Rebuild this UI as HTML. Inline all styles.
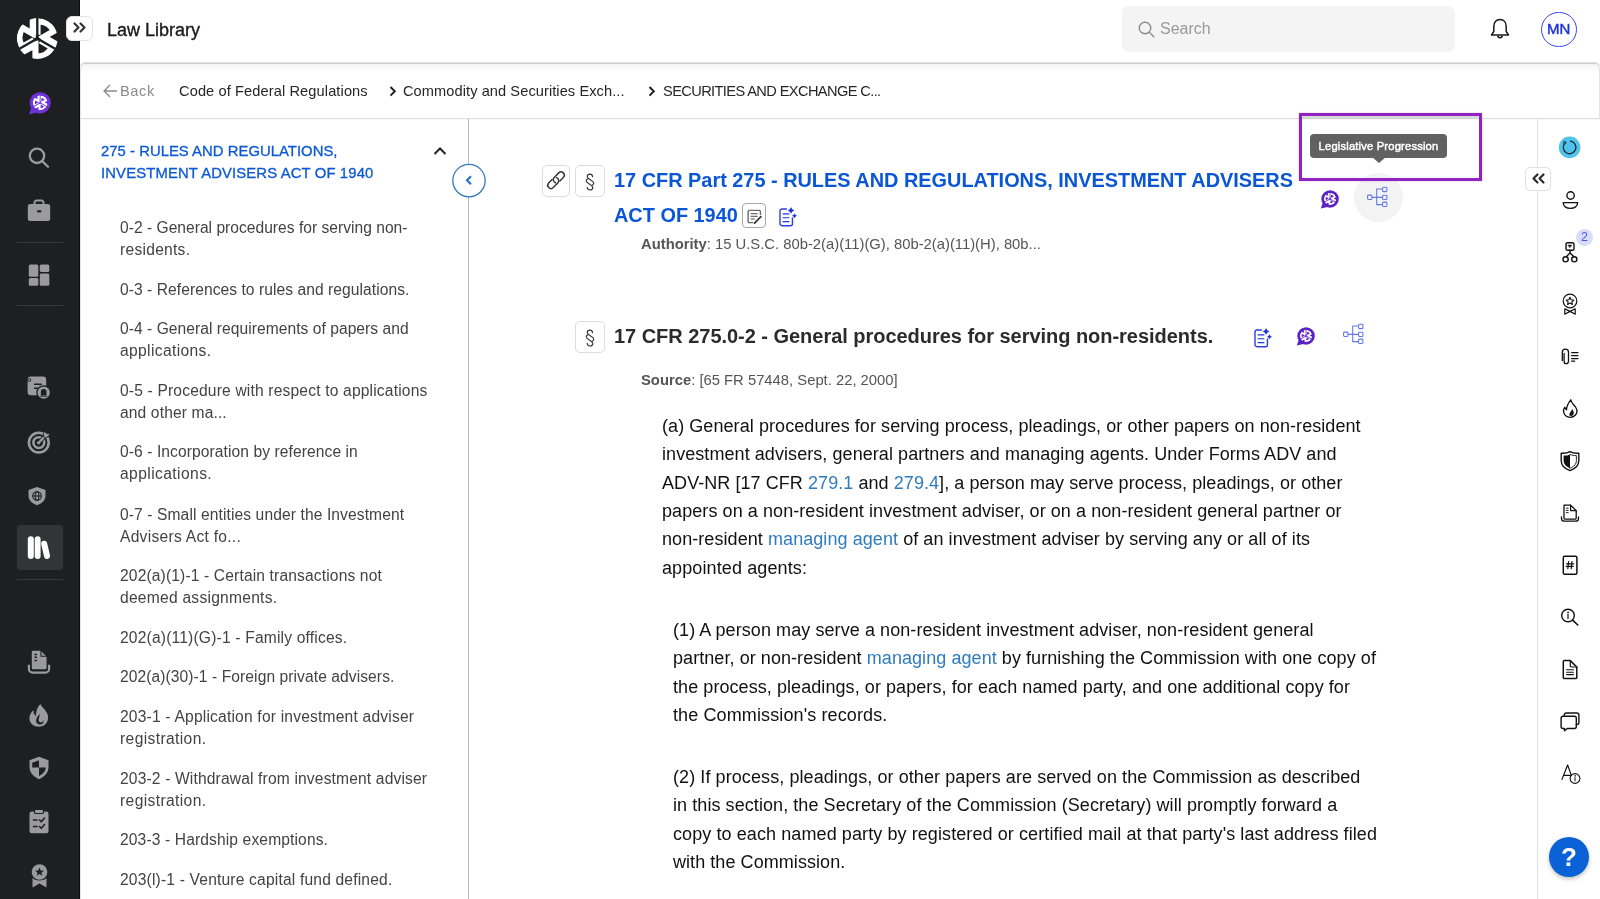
<!DOCTYPE html>
<html><head><meta charset="utf-8">
<style>
*{box-sizing:border-box;margin:0;padding:0}
html,body{width:1600px;height:899px;overflow:hidden;background:#fff;font-family:"Liberation Sans",sans-serif;-webkit-font-smoothing:antialiased}
body{will-change:transform}
.abs{position:absolute}
svg{position:absolute;overflow:visible}
#sb{position:absolute;left:0;top:0;width:80px;height:899px;background:#1e1f21}
.dv{position:absolute;left:17px;width:46px;height:1px;background:#36373a}
#top{position:absolute;left:80px;top:0;width:1520px;height:63px;background:#fff}
#crumb{position:absolute;left:80px;top:63px;width:1520px;height:56px;background:#fff;border-top:1px solid #cbcbcb;border-bottom:1px solid #dedede;border-left:1px solid #e4e4e4;border-right:1px solid #e4e4e4;border-top-left-radius:5px;border-top-right-radius:5px;box-shadow:0 -0.5px 1.5px rgba(0,0,0,0.12), inset 0 8px 8px -6px rgba(0,0,0,0.07)}
.bc{position:absolute;top:17px;font-size:14.6px;line-height:20px;color:#262626;white-space:nowrap}
#lp{position:absolute;left:80px;top:119px;width:389px;height:780px;border-right:1px solid #b9b9b9;border-left:1px solid #e4e4e4}
.li{position:absolute;left:39px;font-size:15.6px;line-height:22px;color:#434343;white-space:nowrap}
#rs{position:absolute;left:1537px;top:119px;width:63px;height:780px;border-left:1px solid #e2e2e2}
.p{position:absolute;font-size:18px;line-height:28.35px;color:#111;white-space:nowrap;letter-spacing:0.05px}
.p a{color:#2f7bc0;text-decoration:none}
.btn{position:absolute;border:1px solid #dcdcdc;border-radius:5px;background:#fff}
</style></head>
<body>
<!-- LEFT DARK SIDEBAR -->
<div id="sb"><div class="abs" style="left:79px;top:0;width:1px;height:899px;background:#0c0d0e"></div>
  <!-- logo -->
  <svg style="left:17px;top:17.8px" width="41" height="41" viewBox="-19.8 -20 40 40">
    <defs>
      <clipPath id="cc"><circle r="19.9"/></clipPath>
      <g id="lg">
        <g clip-path="url(#cc)">
          <g fill="none" stroke="#fff" stroke-width="6" stroke-linejoin="miter" stroke-miterlimit="10">
            <path id="s1" d="M-4.4,-24 V-4.6 L-14.4,-10.4 A16.8,16.8 0 0 0 -14.6,8.2 L-3.2,1.6"/>
            <use href="#s1" transform="rotate(120)"/>
            <use href="#s1" transform="rotate(240)"/>
          </g>
          <g stroke="var(--lbg)" stroke-width="2.3">
            <line id="sp" x1="0" y1="0" x2="0" y2="-22"/>
            <use href="#sp" transform="rotate(120)"/>
            <use href="#sp" transform="rotate(240)"/>
          </g>
          <circle r="2" fill="var(--lbg)"/>
        </g>
      </g>
    </defs>
    <use href="#lg" style="--lbg:#1e1f21"/>
  </svg>
  <!-- purple chat -->
  <svg style="left:28px;top:92px" width="23" height="23" viewBox="0 0 23 23">
    <circle cx="12.2" cy="10.8" r="10.6" fill="#6f32d9"/>
    <path d="M1,22.5 L3.5,15 L9,20.5 Z" fill="#6f32d9"/>
    <g transform="translate(12.2,10.8) scale(0.37)"><use href="#lg" style="--lbg:#6f32d9"/></g>
  </svg>
  <!-- search -->
  <svg style="left:27px;top:146px" width="24" height="24" viewBox="0 0 24 24" fill="none" stroke="#9b9b9d" stroke-width="2.3" stroke-linecap="round">
    <circle cx="10" cy="9.8" r="7.2"/><line x1="15.4" y1="15.2" x2="21" y2="20.8"/>
  </svg>
  <!-- briefcase -->
  <svg style="left:27px;top:199px" width="24" height="24" viewBox="0 0 24 24">
    <path d="M7.5,5.5 V3.6 A2,2 0 0 1 9.5,1.6 H14.5 A2,2 0 0 1 16.5,3.6 V5.5" fill="none" stroke="#9b9b9d" stroke-width="2"/>
    <rect x="0.8" y="5" width="22.4" height="17" rx="2.5" fill="#9b9b9d"/>
    <rect x="10.2" y="11.2" width="4" height="2.2" fill="#1e1f21"/>
  </svg>
  <div class="dv" style="top:242px"></div>
  <!-- dashboard -->
  <svg style="left:28px;top:263.8px" width="22" height="22" viewBox="0 0 22 22" fill="#9b9b9d">
    <rect x="0.8" y="0.5" width="9.5" height="12.2" rx="1.5"/>
    <rect x="0.8" y="14" width="9.5" height="7.8" rx="1.5"/>
    <rect x="11.8" y="0.5" width="9.5" height="7.6" rx="1.5"/>
    <rect x="11.8" y="9.4" width="9.5" height="12.4" rx="1.5"/>
  </svg>
  <div class="dv" style="top:305px"></div>
  <!-- doc bell -->
  <svg style="left:27px;top:376px" width="25" height="25" viewBox="0 0 25 25">
    <rect x="0.6" y="0.6" width="18.6" height="18.6" rx="3.2" fill="#9b9b9d"/>
    <circle cx="2.3" cy="4" r="1.5" fill="none" stroke="#1e1f21" stroke-width="0.9"/>
    <rect x="7" y="7.6" width="7.8" height="1.5" rx="0.5" fill="#1e1f21"/>
    <rect x="7" y="11.4" width="3.8" height="1.5" rx="0.5" fill="#1e1f21"/>
    <circle cx="16.7" cy="16.6" r="7.4" fill="#1e1f21"/>
    <circle cx="16.7" cy="16.6" r="6.1" fill="#9b9b9d"/>
    <path d="M13.9,19.3 V15.9 A2.8,2.8 0 0 1 19.5,15.9 V19.3 Z" fill="#1e1f21"/>
    <rect x="13.2" y="19.6" width="7" height="1" fill="#1e1f21"/>
  </svg>
  <!-- target -->
  <svg style="left:27px;top:430px" width="25" height="25" viewBox="0 0 25 25" fill="none" stroke="#9b9b9d">
    <circle cx="11.8" cy="12.6" r="9.9" stroke-width="2.6"/>
    <circle cx="11.8" cy="12.6" r="5.4" stroke-width="2.6"/>
    <circle cx="11.8" cy="12.6" r="1.9" fill="#9b9b9d" stroke="none"/>
    <line x1="11.8" y1="12.6" x2="21" y2="3.4" stroke="#1e1f21" stroke-width="4"/>
    <line x1="11.8" y1="12.6" x2="19.5" y2="4.9" stroke-width="2.2" stroke-linecap="round"/>
    <path d="M16.2,4.2 L17.4,1.2 L19.6,3.3 L23.4,3.6 L21.2,6.6 L17.6,8.4 Z" fill="#9b9b9d" stroke="#1e1f21" stroke-width="0.9"/>
  </svg>
  <!-- shield globe -->
  <svg style="left:27px;top:486px" width="20" height="20" viewBox="0 0 20 20">
    <path d="M10,1 L18.5,4 V10 C18.5,14.5 14.5,17.5 10,19.3 C5.5,17.5 1.5,14.5 1.5,10 V4 Z" fill="#9b9b9d"/>
    <g fill="none" stroke="#1e1f21" stroke-width="1.1"><circle cx="10" cy="10" r="4.3"/><ellipse cx="10" cy="10" rx="1.8" ry="4.3"/><line x1="5.7" y1="10" x2="14.3" y2="10"/></g>
  </svg>
  <!-- library active -->
  <div class="abs" style="left:17px;top:525px;width:46px;height:45px;border-radius:3px;background:#333437"></div>
  <svg style="left:27px;top:536px" width="24" height="24" viewBox="0 0 24 24" fill="#fff">
    <rect x="0.8" y="0.2" width="6" height="22.7" rx="3"/>
    <rect x="7.7" y="0.2" width="5.9" height="22.7" rx="2.95"/>
    <rect x="15.6" y="4.6" width="6" height="18.6" rx="3" transform="rotate(-13 18.6 13.9)"/>
  </svg>
  <div class="dv" style="top:579px"></div>
  <!-- doc tray -->
  <svg style="left:27px;top:649px" width="24" height="25" viewBox="0 0 24 25">
    <path d="M1.9,15.8 V20 A3.6,3.6 0 0 0 5.5,23.6 H18.5 A3.6,3.6 0 0 0 22.1,20 V15.8" fill="none" stroke="#9b9b9d" stroke-width="2.2"/>
    <path d="M6.1,1 H14 L20.2,7.2 V19 A2,2 0 0 1 18.2,21 H6.1 A2,2 0 0 1 4.1,19 V3 A2,2 0 0 1 6.1,1 Z" fill="#9b9b9d" stroke="#1e1f21" stroke-width="1.3"/>
    <path d="M14,1.2 V7.2 H20" fill="none" stroke="#1e1f21" stroke-width="1.1"/>
    <g fill="#1e1f21"><rect x="7.4" y="4.7" width="2.6" height="1.5" rx="0.4"/><rect x="7.4" y="7.6" width="2.6" height="1.5" rx="0.4"/><rect x="7.4" y="10.8" width="2.6" height="1.5" rx="0.4"/></g>
  </svg>
  <!-- fire -->
  <svg style="left:28px;top:703px" width="22" height="25" viewBox="0 0 22 25">
    <path d="M12.5,0.9 C13.5,4 17.5,6.5 19.3,10.5 C21,14.5 20,19.5 16.5,22 C14.8,23.2 12.8,23.7 10.8,23.7 C6,23.7 1.4,20.5 1.4,15.2 C1.4,11.8 3.2,9 5.5,7.2 C5.6,9.6 6.5,11 8,11.8 C8,7.5 9.5,3.5 12.5,0.9 Z" fill="#9b9b9d"/>
    <path d="M5.8,9.6 C6.3,11.2 7.2,12.2 8.3,12.6" fill="none" stroke="#1e1f21" stroke-width="1"/>
    <path d="M11.2,10.8 C10.6,13.4 8,14.8 8,17.8 C8,20.2 10,21.6 12,21.6 C14.6,21.6 16,19.6 15.6,17 C15.1,18.6 14,19.4 12.8,19.4 C11.2,19.4 10.4,18.2 10.6,16.6 C10.9,14.6 12.2,13.2 11.2,10.8 Z" fill="#1e1f21"/>
  </svg>
  <!-- shield half -->
  <svg style="left:28px;top:756px" width="22" height="24" viewBox="0 0 22 24">
    <path d="M11,0.8 L20.5,4.3 V11 C20.5,16.5 16.5,20.8 11,23.2 C5.5,20.8 1.5,16.5 1.5,11 V4.3 Z" fill="#9b9b9d"/>
    <path d="M11,4.2 L4.2,6.8 V11.5 H11 Z" fill="#1e1f21"/>
    <path d="M11,11.5 H17.8 C17.5,15.5 14.8,18.3 11,20 Z" fill="#1e1f21"/>
  </svg>
  <!-- clipboard -->
  <svg style="left:28px;top:809px" width="22" height="25" viewBox="0 0 22 25">
    <rect x="1.5" y="2.5" width="19" height="21.8" rx="2.2" fill="#9b9b9d"/>
    <rect x="6.5" y="0.5" width="9" height="4" rx="1.2" fill="#9b9b9d" stroke="#1e1f21" stroke-width="1.2"/>
    <g stroke="#1e1f21" stroke-width="1.6" fill="none" stroke-linecap="round" stroke-linejoin="round">
      <line x1="5.5" y1="11" x2="9" y2="11"/><path d="M11.5,11 L13.3,12.8 L16.5,9"/>
      <line x1="5.5" y1="17.5" x2="9" y2="17.5"/><path d="M11.5,17.5 L13.3,19.3 L16.5,15.5"/>
    </g>
  </svg>
  <!-- award -->
  <svg style="left:30px;top:864px" width="19" height="24" viewBox="0 0 19 24">
    <circle cx="9.5" cy="8" r="7.8" fill="#9b9b9d"/>
    <path d="M9.5,3.6 L10.8,6.5 L13.9,6.7 L11.5,8.7 L12.3,11.8 L9.5,10.1 L6.7,11.8 L7.5,8.7 L5.1,6.7 L8.2,6.5 Z" fill="#1e1f21"/>
    <path d="M2.5,14 V23.5 L9.5,19.5 L16.5,23.5 V14 C14.5,15.8 12,16.5 9.5,16.5 C7,16.5 4.5,15.8 2.5,14 Z" fill="#9b9b9d"/>
  </svg>
</div>
<!-- expand button -->
<div class="abs" style="left:66px;top:16px;width:27px;height:25px;border-radius:6px;background:#fff;border:1px solid #e2e2e2;z-index:5"></div>
<svg style="z-index:6;left:73px;top:22px" width="14" height="12" viewBox="0 0 14 12" fill="none" stroke="#333" stroke-width="2.2" stroke-linecap="round" stroke-linejoin="round">
  <path d="M1.5,1.5 L5.5,5.5 L1.5,9.5"/><path d="M7.5,1.5 L11.5,5.5 L7.5,9.5"/>
</svg>

<!-- TOP BAR -->
<div id="top">
  <div class="abs" style="left:27px;top:19px;font-size:18px;line-height:22px;color:#1a1a1a;-webkit-text-stroke:0.35px #1a1a1a">Law Library</div>
  <div class="abs" style="left:1042px;top:6px;width:333px;height:46px;border-radius:7px;background:#f4f4f4"></div>
  <svg style="left:1058px;top:21px" width="17" height="17" viewBox="0 0 17 17" fill="none" stroke="#8e8e8e" stroke-width="1.4" stroke-linecap="round">
    <circle cx="7" cy="7" r="5.8"/><line x1="11.3" y1="11.3" x2="15.8" y2="15.8"/>
  </svg>
  <div class="abs" style="left:1080px;top:18px;font-size:16px;line-height:22px;color:#9a9a9a">Search</div>
  <svg style="left:1410px;top:18px" width="20" height="22" viewBox="0 0 20 22" fill="none" stroke="#1a1a1a" stroke-width="1.5" stroke-linejoin="round">
    <path d="M10,1.5 C6,1.5 3.8,4.5 3.8,8.5 V13.5 L1.5,17 H18.5 L16.2,13.5 V8.5 C16.2,4.5 14,1.5 10,1.5 Z"/>
    <path d="M7.8,17.5 A2.2,2.2 0 0 0 12.2,17.5"/>
  </svg>
  <div class="abs" style="left:1461px;top:11.5px;width:35.5px;height:35.5px;border:1.7px solid #3447e8;border-radius:50%;color:#1f33d8;font-size:15px;line-height:32px;text-align:center;-webkit-text-stroke:0.45px #1f33d8">MN</div>
</div>

<!-- BREADCRUMB -->
<div id="crumb">
  <svg style="left:21px;top:19px" width="16" height="16" viewBox="0 0 16 16" fill="none" stroke="#8a8a8a" stroke-width="1.4" stroke-linecap="round" stroke-linejoin="round">
    <path d="M14.5,8 H2 M7.5,2.5 L2,8 L7.5,13.5"/>
  </svg>
  <div class="bc" style="left:39px;color:#8a8a8a;letter-spacing:0.6px">Back</div>
  <div class="bc" style="left:98px;letter-spacing:0.11px">Code of Federal Regulations</div>
  <svg style="left:308px;top:22px" width="8" height="11" viewBox="0 0 8 11" fill="none" stroke="#222" stroke-width="2"><path d="M1.5,1 L5.8,5.3 L1.5,9.6"/></svg>
  <div class="bc" style="left:322px;letter-spacing:0.08px">Commodity and Securities Exch...</div>
  <svg style="left:567px;top:22px" width="8" height="11" viewBox="0 0 8 11" fill="none" stroke="#222" stroke-width="2"><path d="M1.5,1 L5.8,5.3 L1.5,9.6"/></svg>
  <div class="bc" style="left:582px;letter-spacing:-0.6px">SECURITIES AND EXCHANGE C...</div>
</div>

<!-- LEFT PANEL -->
<div id="lp">
  <div class="abs" style="left:20px;top:21px;font-size:14.85px;line-height:22px;color:#0b59d6;white-space:nowrap;-webkit-text-stroke:0.3px #0b59d6"><span style="letter-spacing:0.03px">275 - RULES AND REGULATIONS,</span><br><span style="letter-spacing:0.13px">INVESTMENT ADVISERS ACT OF 1940</span></div>
  <svg style="left:352px;top:27px" width="14" height="10" viewBox="0 0 14 10" fill="none" stroke="#222" stroke-width="2"><path d="M1.5,8 L7,2.5 L12.5,8"/></svg>
  <div class="li" style="top:98px"><span style="letter-spacing:0.015px">0-2 - General procedures for serving non-</span><br><span style="letter-spacing:0.267px">residents.</span></div>
  <div class="li" style="top:160px"><span style="letter-spacing:0.059px">0-3 - References to rules and regulations.</span></div>
  <div class="li" style="top:199px"><span style="letter-spacing:0.044px">0-4 - General requirements of papers and</span><br><span style="letter-spacing:0.367px">applications.</span></div>
  <div class="li" style="top:260.5px"><span style="letter-spacing:0.172px">0-5 - Procedure with respect to applications</span><br><span style="letter-spacing:0.129px">and other ma...</span></div>
  <div class="li" style="top:322px"><span style="letter-spacing:0.085px">0-6 - Incorporation by reference in</span><br><span style="letter-spacing:0.417px">applications.</span></div>
  <div class="li" style="top:385px"><span style="letter-spacing:0.103px">0-7 - Small entities under the Investment</span><br><span style="letter-spacing:0.271px">Advisers Act fo...</span></div>
  <div class="li" style="top:446px"><span style="letter-spacing:0.143px">202(a)(1)-1 - Certain transactions not</span><br><span style="letter-spacing:0.250px">deemed assignments.</span></div>
  <div class="li" style="top:508px"><span style="letter-spacing:0.184px">202(a)(11)(G)-1 - Family offices.</span></div>
  <div class="li" style="top:547px"><span style="letter-spacing:0.079px">202(a)(30)-1 - Foreign private advisers.</span></div>
  <div class="li" style="top:587px"><span style="letter-spacing:0.193px">203-1 - Application for investment adviser</span><br><span style="letter-spacing:0.383px">registration.</span></div>
  <div class="li" style="top:649px"><span style="letter-spacing:0.154px">203-2 - Withdrawal from investment adviser</span><br><span style="letter-spacing:0.383px">registration.</span></div>
  <div class="li" style="top:710px"><span style="letter-spacing:0.126px">203-3 - Hardship exemptions.</span></div>
  <div class="li" style="top:750px"><span style="letter-spacing:0.179px">203(l)-1 - Venture capital fund defined.</span></div>
</div>
<!-- collapse circle -->
<svg style="left:450px;top:162px" width="38" height="38" viewBox="0 0 38 38"><circle cx="19" cy="18.6" r="16.2" fill="#fff" stroke="#2f7bc0" stroke-width="1.3"/></svg>
<svg style="left:464px;top:175px" width="10" height="11" viewBox="0 0 10 11" fill="none" stroke="#2470bf" stroke-width="2.1"><path d="M7,1.3 L3,5.3 L7,9.3"/></svg>

<!-- MAIN -->
<div id="main">
  <div class="btn" style="left:542px;top:165px;width:28px;height:32px"></div>
  <svg style="left:544px;top:168.2px" width="24" height="24" viewBox="0 0 24 24">
    <g transform="translate(12,12.2) rotate(-45) scale(0.9)" fill="none" stroke="#333" stroke-width="1.6" stroke-linecap="round">
      <path d="M-2.5,-3.6 H-7.9 A3.6,3.6 0 0 0 -7.9,3.6 H-0.8 A3.6,3.6 0 0 0 2.4,-1.6"/>
      <path d="M2.5,3.6 H7.9 A3.6,3.6 0 0 0 7.9,-3.6 H0.8 A3.6,3.6 0 0 0 -2.4,1.6"/>
    </g>
  </svg>
  <div class="btn" style="left:575px;top:165px;width:30px;height:32px"></div>
  <svg style="left:580px;top:170px" width="20" height="24" viewBox="580 170 20 24"><g transform="translate(0,-156)" fill="none" stroke="#333" stroke-width="1.15" stroke-linecap="round">
    <path d="M592.6,332.7 C592.4,331 591.4,330.1 590,330.1 C588.4,330.1 587.2,331.1 587.2,332.5 C587.2,334 588.6,334.8 590.3,335.8 C592.3,337 593.8,337.8 593.8,339.2 C593.8,340.3 593,341 591.8,341.6"/>
    <path d="M587.2,343.3 C587.4,345 588.4,346 590,346 C591.6,346 592.8,345 592.8,343.5 C592.8,342 591.4,341.2 589.7,340.2 C587.7,339 586.2,338.2 586.2,336.8 C586.2,335.7 587,335 588.2,334.4"/>
  </g></svg>

  <div class="abs" style="left:614px;top:163px;font-size:19.9px;line-height:34.5px;font-weight:bold;color:#0a56d6;white-space:nowrap">17 CFR Part 275 - RULES AND REGULATIONS, INVESTMENT ADVISERS<br>ACT OF 1940</div>
  <div class="btn" style="left:742px;top:203px;width:24px;height:25px;border-color:#a8a8a8;border-radius:4px"></div>
  <svg style="left:746.5px;top:208.5px" width="15" height="15" viewBox="0 0 16 16">
    <path d="M6.5,14.5 H2.5 A1.3,1.3 0 0 1 1.2,13.2 V2.8 A1.3,1.3 0 0 1 2.5,1.5 H13 A1.3,1.3 0 0 1 14.3,2.8 V6.5" fill="none" stroke="#6a6a6a" stroke-width="1.5"/>
    <g fill="#6a6a6a"><rect x="3.8" y="4.3" width="7.5" height="1.3"/><rect x="3.8" y="7.2" width="7.5" height="1.3"/><rect x="3.8" y="10" width="4.5" height="1.3"/></g>
    <path d="M8,15 L14.8,8.2" stroke="#333" stroke-width="1.8" stroke-linecap="round"/>
  </svg>
  <svg style="left:778px;top:204.6px" width="22" height="23" viewBox="-2 -4 22 23">
    <path d="M6.5,0 H2 A2,2 0 0 0 0,2 V14.7 A2,2 0 0 0 2,16.7 H10.45 A2,2 0 0 0 12.45,14.7 V8.9" fill="none" stroke="#2a3de4" stroke-width="1.4" stroke-linecap="round"/>
    <path d="M3.1,4.9 H8.9 M3.1,8.75 H8.9 M3.1,12.65 H8.9" stroke="#2236e0" stroke-width="1.2" stroke-linecap="round"/>
    <path d="M11.05,-2.0 C12.172,0.2779999999999998 12.172,0.2779999999999998 14.450000000000001,1.4 C12.172,2.5220000000000002 12.172,2.5220000000000002 11.05,4.8 C9.928,2.5220000000000002 9.928,2.5220000000000002 7.65,1.4 C9.928,0.2779999999999998 9.928,0.2779999999999998 11.05,-2.0 Z" fill="#1f34e0"/>
    <path d="M14.5,4.199999999999999 C15.358,5.942 15.358,5.942 17.1,6.8 C15.358,7.6579999999999995 15.358,7.6579999999999995 14.5,9.4 C13.642,7.6579999999999995 13.642,7.6579999999999995 11.9,6.8 C13.642,5.942 13.642,5.942 14.5,4.199999999999999 Z" fill="#1f34e0"/>
  </svg>
  <div class="abs" style="left:641px;top:235px;font-size:14.8px;line-height:18px;color:#555;white-space:nowrap"><b>Authority</b>: 15 U.S.C. 80b-2(a)(11)(G), 80b-2(a)(11)(H), 80b...</div>

  <!-- purple chat title -->
  <svg style="left:1320px;top:190px" width="19" height="19" viewBox="0 0 23 23">
    <circle cx="12.2" cy="10.8" r="10.6" fill="#5b21c4"/>
    <path d="M1,22.5 L3.5,15 L9,20.5 Z" fill="#5b21c4"/>
    <g transform="translate(12.2,10.8) scale(0.37)"><use href="#lg" style="--lbg:#5b21c4"/></g>
  </svg>
  <div class="abs" style="left:1354px;top:173px;width:49px;height:49px;border-radius:50%;background:#f3f3f3"></div>
  <svg style="left:1366px;top:185.3px" width="23" height="22" viewBox="0 0 23 22" fill="none" stroke="#6476ea" stroke-width="1.05">
    <rect x="1.6" y="10.1" width="4.3" height="4.3" rx="0.8"/>
    <path d="M5.9,12.35 H16.6 M16.6,3.9 H10.7 V19.6 H16.6"/>
    <rect x="16.6" y="2.3" width="4.3" height="4.3" rx="0.8"/>
    <rect x="16.6" y="10.2" width="4.3" height="4.3" rx="0.8"/>
    <rect x="16.6" y="17.1" width="4.3" height="4.3" rx="0.8"/>
  </svg>
  <!-- tooltip + purple box -->
  <div class="abs" style="left:1302px;top:116px;width:177px;height:3px;background:linear-gradient(#dcdcdc,#d2d2d2)"></div>
  <div class="abs" style="left:1299px;top:113px;width:183px;height:68px;border:3px solid #9223c2;box-shadow:0 0 2px rgba(120,0,160,0.25)"></div>
  <div class="abs" style="left:1310px;top:133.5px;width:137px;height:24px;border-radius:4px;background:#616161;color:#fff;font-size:11.2px;line-height:24.5px;text-align:center;white-space:nowrap;letter-spacing:0.18px;-webkit-text-stroke:0.45px #fff">Legislative Progression</div>
  <svg style="left:1372px;top:157px" width="14" height="7" viewBox="0 0 14 7"><path d="M0,0 H14 L7,6 Z" fill="#616161"/></svg>

  <!-- section 2 -->
  <div class="btn" style="left:575px;top:321px;width:30px;height:32px"></div>
  <svg style="left:580px;top:326px" width="20" height="24" viewBox="580 326 20 24"><g transform="translate(0,0)" fill="none" stroke="#333" stroke-width="1.15" stroke-linecap="round">
    <path d="M592.6,332.7 C592.4,331 591.4,330.1 590,330.1 C588.4,330.1 587.2,331.1 587.2,332.5 C587.2,334 588.6,334.8 590.3,335.8 C592.3,337 593.8,337.8 593.8,339.2 C593.8,340.3 593,341 591.8,341.6"/>
    <path d="M587.2,343.3 C587.4,345 588.4,346 590,346 C591.6,346 592.8,345 592.8,343.5 C592.8,342 591.4,341.2 589.7,340.2 C587.7,339 586.2,338.2 586.2,336.8 C586.2,335.7 587,335 588.2,334.4"/>
  </g></svg>
  <div class="abs" style="left:614px;top:319px;font-size:20px;line-height:34px;font-weight:bold;color:#2b2b2b;white-space:nowrap;letter-spacing:-0.033px">17 CFR 275.0-2 - General procedures for serving non-residents.</div>
  <svg style="left:1253px;top:325.6px" width="22" height="23" viewBox="-2 -4 22 23">
    <path d="M6.5,0 H2 A2,2 0 0 0 0,2 V14.7 A2,2 0 0 0 2,16.7 H10.45 A2,2 0 0 0 12.45,14.7 V8.9" fill="none" stroke="#2a3de4" stroke-width="1.4" stroke-linecap="round"/>
    <path d="M3.1,4.9 H8.9 M3.1,8.75 H8.9 M3.1,12.65 H8.9" stroke="#2236e0" stroke-width="1.2" stroke-linecap="round"/>
    <path d="M11.05,-2.0 C12.172,0.2779999999999998 12.172,0.2779999999999998 14.450000000000001,1.4 C12.172,2.5220000000000002 12.172,2.5220000000000002 11.05,4.8 C9.928,2.5220000000000002 9.928,2.5220000000000002 7.65,1.4 C9.928,0.2779999999999998 9.928,0.2779999999999998 11.05,-2.0 Z" fill="#1f34e0"/>
    <path d="M14.5,4.199999999999999 C15.358,5.942 15.358,5.942 17.1,6.8 C15.358,7.6579999999999995 15.358,7.6579999999999995 14.5,9.4 C13.642,7.6579999999999995 13.642,7.6579999999999995 11.9,6.8 C13.642,5.942 13.642,5.942 14.5,4.199999999999999 Z" fill="#1f34e0"/>
  </svg>
  <svg style="left:1296px;top:327px" width="19" height="19" viewBox="0 0 23 23">
    <circle cx="12.2" cy="10.8" r="10.6" fill="#5b21c4"/>
    <path d="M1,22.5 L3.5,15 L9,20.5 Z" fill="#5b21c4"/>
    <g transform="translate(12.2,10.8) scale(0.37)"><use href="#lg" style="--lbg:#5b21c4"/></g>
  </svg>
  <svg style="left:1342px;top:322px" width="23" height="22" viewBox="0 0 23 22" fill="none" stroke="#6476ea" stroke-width="1.05">
    <rect x="1.6" y="10.1" width="4.3" height="4.3" rx="0.8"/>
    <path d="M5.9,12.35 H16.6 M16.6,3.9 H10.7 V19.6 H16.6"/>
    <rect x="16.6" y="2.3" width="4.3" height="4.3" rx="0.8"/>
    <rect x="16.6" y="10.2" width="4.3" height="4.3" rx="0.8"/>
    <rect x="16.6" y="17.1" width="4.3" height="4.3" rx="0.8"/>
  </svg>
  <div class="abs" style="left:641px;top:371px;font-size:14.8px;line-height:18px;color:#555;white-space:nowrap"><b>Source</b>: [65 FR 57448, Sept. 22, 2000]</div>

  <div class="p" style="left:662px;top:412px"><span style="letter-spacing:0.0735px">(a) General procedures for serving process, pleadings, or other papers on non-resident</span><br><span style="letter-spacing:0.0669px">investment advisers, general partners and managing agents. Under Forms ADV and</span><br><span style="letter-spacing:0.0639px">ADV-NR [17 CFR <a>279.1</a> and <a>279.4</a>], a person may serve process, pleadings, or other</span><br><span style="letter-spacing:0.0741px">papers on a non-resident investment adviser, or on a non-resident general partner or</span><br><span style="letter-spacing:0.0700px">non-resident <a>managing agent</a> of an investment adviser by serving any or all of its</span><br><span style="letter-spacing:0.1125px">appointed agents:</span></div>
  <div class="p" style="left:673px;top:616px"><span style="letter-spacing:0.0799px">(1) A person may serve a non-resident investment adviser, non-resident general</span><br><span style="letter-spacing:0.0655px">partner, or non-resident <a>managing agent</a> by furnishing the Commission with one copy of</span><br><span style="letter-spacing:0.0705px">the process, pleadings, or papers, for each named party, and one additional copy for</span><br><span style="letter-spacing:0.1167px">the Commission's records.</span></div>
  <div class="p" style="left:673px;top:763px"><span style="letter-spacing:0.0849px">(2) If process, pleadings, or other papers are served on the Commission as described</span><br><span style="letter-spacing:0.0717px">in this section, the Secretary of the Commission (Secretary) will promptly forward a</span><br><span style="letter-spacing:0.0911px">copy to each named party by registered or certified mail at that party's last address filed</span><br><span style="letter-spacing:0.0605px">with the Commission.</span></div>
</div>

<!-- RIGHT SIDEBAR -->
<div id="rs">
  <div class="abs" style="left:-13px;top:48px;width:26px;height:24px;border-radius:5px;background:#fff;border:1px solid #e0e0e0"></div>
  <svg style="left:-6.5px;top:54px" width="13" height="12" viewBox="0 0 13 12" fill="none" stroke="#2a2a2a" stroke-width="2.2" stroke-linecap="round" stroke-linejoin="round">
    <path d="M5.5,1.5 L1.5,5.5 L5.5,9.5"/><path d="M11.5,1.5 L7.5,5.5 L11.5,9.5"/>
  </svg>
</div>
<!-- right icons (absolute page coords) -->
<svg style="left:1537px;top:119px" width="63" height="780" viewBox="1537 119 63 780" fill="none" stroke="#111" stroke-width="1.4" stroke-linecap="round" stroke-linejoin="round">
  <!-- refresh -->
  <circle cx="1569.6" cy="147.4" r="10.8" fill="#4fc3eb" stroke="none"/>
  <path d="M1570.4,141.15 A6.3,6.3 0 1 1 1565.15,142.95" stroke="#1e2a30" stroke-width="1.3"/>
  <circle cx="1564.6" cy="142.5" r="1.1" stroke="#1e2a30" stroke-width="1"/>
  <!-- person -->
  <circle cx="1570.6" cy="195.5" r="3.7"/>
  <path d="M1563.2,202.6 H1577.6 C1577.6,206.2 1574.6,208.4 1570.4,208.4 C1566.2,208.4 1563.2,206.2 1563.2,202.6 Z"/>
  <!-- org chart -->
  <rect x="1566" y="242.7" width="8" height="7.6" rx="1.6"/>
  <path d="M1568.3,245.2 H1571.7 L1570,247.3 Z" fill="#111" stroke-width="0.8"/>
  <path d="M1570,250.3 V253 M1570,253 L1566.5,256.5 M1570,253 L1573.8,256.5"/>
  <circle cx="1565.6" cy="259.3" r="2.6"/>
  <circle cx="1574.3" cy="259.3" r="2.6"/>
  <!-- award -->
  <circle cx="1570" cy="301" r="6.8" stroke-width="1.2"/>
  <path d="M1570,297.2 L1571.2,299.7 L1573.8,300 L1571.9,301.8 L1572.4,304.4 L1570,303.1 L1567.6,304.4 L1568.1,301.8 L1566.2,300 L1568.8,299.7 Z" stroke-width="1.1"/>
  <path d="M1564.8,308.8 V314.2 L1570,311.4 L1575.2,314.2 V308.8 L1570,311.4 Z" stroke-width="1.2"/>
  <!-- paperclip lines -->
  <path d="M1562.3,360.6 V352.2 A3.1,3.1 0 0 1 1568.5,352.2 V361.4 A2.2,2.2 0 0 1 1564.1,361.4 V353.5" stroke-width="1.3"/>
  <path d="M1571.6,352.6 H1578 M1571.6,355.6 H1578 M1571.6,358.6 H1578 M1571.6,361.2 H1574.6" stroke-width="1.3"/>
  <!-- fire -->
  <path d="M1570.8,399.8 C1571,403 1574,404.6 1575.8,407.5 C1577.3,410 1577,413.3 1575.2,415.3 C1573.8,416.8 1572,417.3 1570.2,417.3 C1567.3,417.3 1564.6,415.6 1563.8,412.7 C1563.2,410.5 1563.7,408.6 1564.8,407.2 C1565.2,408.6 1565.8,409.3 1566.6,409.7 C1566.4,406 1568.6,402.6 1570.8,399.8 Z" stroke-width="1.3"/>
  <path d="M1572.2,408.7 C1572,411 1569.3,412.3 1569.3,414.6 C1569.3,415.6 1570,416 1570.8,416 C1572.8,416 1573.9,414.5 1573.8,412.6 C1573.7,411.2 1572.9,410.2 1572.2,408.7 Z" fill="#111" stroke="none"/>
  <!-- shield -->
  <path d="M1570,451.6 C1567.5,453.2 1564.5,453.4 1561.2,453.2 V460.5 C1561.2,465.2 1564.8,468.8 1570,470.6 C1575.2,468.8 1578.8,465.2 1578.8,460.5 V453.2 C1575.5,453.4 1572.5,453.2 1570,451.6 Z" stroke-width="1.4"/>
  <path d="M1570,454.4 C1568,455.4 1565.8,455.7 1563.6,455.6 V460.6 C1563.6,464 1566,466.8 1570,468.3 Z" fill="#111" stroke="none"/>
  <path d="M1570,454.4 C1572,455.4 1574.2,455.7 1576.4,455.6 V460.6 C1576.4,464 1574,466.8 1570,468.3" stroke-width="0.9"/>
  <!-- doc tray -->
  <path d="M1564,505.2 H1570.6 L1576.2,510.6 V518 A1.2,1.2 0 0 1 1575,519.2 H1565.2 A1.2,1.2 0 0 1 1564,518 V506.4 A1.2,1.2 0 0 1 1565.2,505.2" stroke-width="1.3"/>
  <path d="M1570.6,505.2 V510.6 H1576.2" stroke-width="1.2"/>
  <path d="M1566.3,508.2 H1568.2 M1566.3,510.4 H1568.2 M1566.3,512.6 H1568.2" stroke-width="0.9"/>
  <path d="M1561.5,516.8 V518.4 A2.8,2.8 0 0 0 1564.3,521.2 H1575.7 A2.8,2.8 0 0 0 1578.5,518.4 V516.8" stroke-width="1.3"/>
  <!-- hash doc -->
  <rect x="1563.3" y="556.3" width="13.6" height="18" rx="1.4" stroke-width="1.5"/>
  <path d="M1568.6,561.6 L1567.8,568.6 M1572,561.6 L1571.2,568.6 M1566.6,563.8 H1573.6 M1566.2,566.4 H1573.2" stroke-width="1.2"/>
  <!-- search info -->
  <circle cx="1568" cy="615.5" r="6.3" stroke-width="1.4"/>
  <path d="M1572.6,620.2 L1577.8,625" stroke-width="1.6"/>
  <path d="M1568,614.2 V618.4" stroke-width="1.2"/>
  <circle cx="1568" cy="612.3" r="0.4" fill="#111" stroke-width="0.8"/>
  <!-- doc -->
  <path d="M1564.4,660.6 H1570.3 L1576.8,667 V677.4 A1.1,1.1 0 0 1 1575.7,678.5 H1564.4 A1.1,1.1 0 0 1 1563.3,677.4 V661.7 A1.1,1.1 0 0 1 1564.4,660.6 Z" stroke-width="1.5"/>
  <path d="M1570.3,660.6 V665.9 A1.1,1.1 0 0 0 1571.4,667 H1576.8" stroke-width="1.2"/>
  <path d="M1566.6,669.8 H1573.4 M1566.6,672.2 H1573.4 M1566.6,674.6 H1573.4" stroke-width="1.1"/>
  <!-- chats -->
  <path d="M1564.3,715.6 V714.9 A1.9,1.9 0 0 1 1566.2,713 H1577 A1.9,1.9 0 0 1 1578.9,714.9 V722.6 A1.9,1.9 0 0 1 1577,724.5 H1576.3" stroke-width="1.4"/>
  <path d="M1563,716.2 H1574.4 A1.9,1.9 0 0 1 1576.3,718.1 V726.6 A1.9,1.9 0 0 1 1574.4,728.5 H1567.2 L1564.5,730.8 V728.5 H1563 A1.9,1.9 0 0 1 1561.1,726.6 V718.1 A1.9,1.9 0 0 1 1563,716.2 Z" stroke-width="1.4"/>
  <!-- A info -->
  <path d="M1562,779.4 L1567.6,765 L1571.4,775.4" stroke-width="1.2"/>
  <path d="M1563.8,775.3 H1570.6" stroke-width="1.2"/>
  <circle cx="1575" cy="778.5" r="4.9" stroke-width="1.1"/>
  <path d="M1575,777.6 V780.8" stroke-width="1"/>
  <circle cx="1575" cy="775.9" r="0.3" fill="#111" stroke-width="0.7"/>
</svg>
<div class="abs" style="left:1576px;top:229px;width:17px;height:17px;border-radius:50%;background:#dadcfa;color:#4a57e6;font-size:12.5px;line-height:17px;text-align:center">2</div>
<div class="abs" style="left:1549px;top:836.5px;width:40px;height:40px;border-radius:50%;background:#0b62d6;box-shadow:0 2px 4px rgba(0,0,0,0.25);color:#fff;font-size:26px;font-weight:bold;line-height:40px;text-align:center">?</div>

</body></html>
